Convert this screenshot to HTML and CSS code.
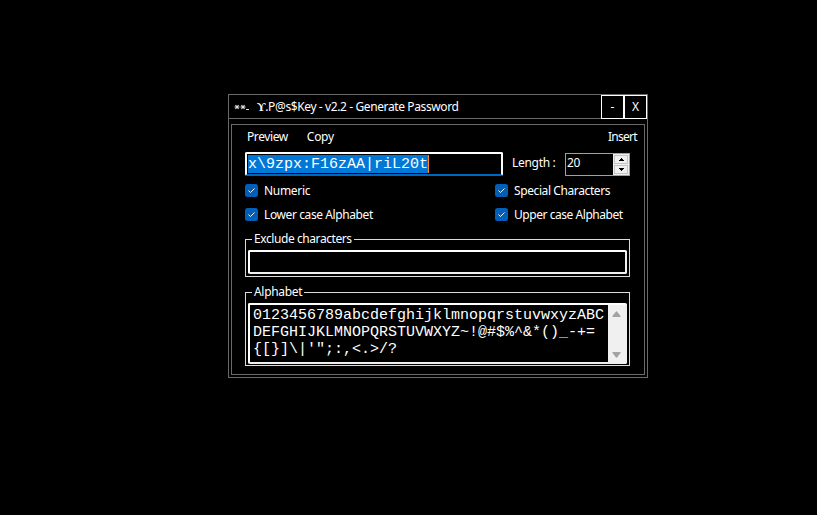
FILE: index.html
```html
<!DOCTYPE html>
<html lang="en">
<head>
<meta charset="utf-8">
<title>Generate Password</title>
<link rel="stylesheet" href="styles.css">
</head>
<body>
<main class="window">
  <header class="titlebar">
    <svg class="app-icon" width="16" height="8" viewBox="0 0 16 8"><path d="M1.500 2l3 4M4.500 2l-3 4M.5 4h5M7.500 2l3 4M10.500 2l-3 4M6.500 4h5M12 6.500h3" stroke="#ddd" stroke-width="1.200" fill="none"/></svg>
    <h1 class="title"><b class="logo">ϒ</b>.P@s$Key - v2.2 - Generate Password</h1>
    <button class="win-btn">-</button>
    <button class="win-btn close">X</button>
  </header>
  <section class="panel">
    <nav class="menu"><span class="m-preview">Preview</span><span class="m-copy">Copy</span><span class="m-insert">Insert</span></nav>
    <div class="row">
      <div class="password"><span class="selection">x\9zpx:F16zAA|riL20t</span></div>
      <span class="length">Length :</span>
      <div class="spinner"><span class="value">20</span>
        <div class="arrows">
          <i class="step"><svg width="5" height="3" viewBox="0 0 5 3"><path d="M2 0h1v1h1v1h1v1H0V2h1V1h1z"/></svg></i>
          <i class="step"><svg width="5" height="3" viewBox="0 0 5 3"><path d="M0 0h5v1H4v1H3v1H2V2H1V1H0z"/></svg></i>
        </div>
      </div>
    </div>
    <div class="checks">
      <label class="check"><svg class="box" width="13" height="13" viewBox="0 0 13 13"><rect width="13" height="13" rx="2.500"/><path d="M3.500 6.500l2 2 4-4"/></svg><span class="c-num">Numeric</span></label>
      <label class="check"><svg class="box" width="13" height="13" viewBox="0 0 13 13"><rect width="13" height="13" rx="2.500"/><path d="M3.500 6.500l2 2 4-4"/></svg><span class="c-long">Special Characters</span></label>
      <label class="check"><svg class="box" width="13" height="13" viewBox="0 0 13 13"><rect width="13" height="13" rx="2.500"/><path d="M3.500 6.500l2 2 4-4"/></svg><span class="c-long">Lower case Alphabet</span></label>
      <label class="check"><svg class="box" width="13" height="13" viewBox="0 0 13 13"><rect width="13" height="13" rx="2.500"/><path d="M3.500 6.500l2 2 4-4"/></svg><span class="c-upper">Upper case Alphabet</span></label>
    </div>
    <div class="group exclude">
      <span class="legend l-excl">Exclude characters</span>
      <div class="field"></div>
    </div>
    <div class="group alphabet">
      <span class="legend">Alphabet</span>
      <div class="field area">
        <div class="chars">0123456789abcdefghijklmnopqrstuvwxyzABC<br>DEFGHIJKLMNOPQRSTUVWXYZ~!@#$%^&amp;*()_-+=<br>{[}]\|'";:,&lt;.&gt;/?</div>
        <div class="scrollbar">
          <svg width="9" height="6" viewBox="0 0 9 6"><path d="M1 6Q0 6 .5 5L4 .5Q4.500 0 5 .5L8.500 5Q9 6 8 6z"/></svg>
          <svg width="9" height="6" viewBox="0 0 9 6"><path d="M1 0Q0 0 .5 1L4 5.500Q4.500 6 5 5.500L8.500 1Q9 0 8 0z"/></svg>
        </div>
      </div>
    </div>
  </section>
</main>
</body>
</html>
```
FILE: styles.css
```css
* { box-sizing: border-box; }
body { margin: 0; padding: 94px 0 0 228px; height: 515px; background: #000; color: #fff; font: 12px/16px "Noto Sans", sans-serif; letter-spacing: -0.3px; overflow: hidden; }
svg { display: block; flex: none; }
span, h1 { white-space: nowrap; }
.window { width: 420px; height: 284px; border: 1px solid #696969; }
.titlebar { display: flex; align-items: center; height: 24px; border-bottom: 1px solid #696969; }
.app-icon { margin-left: 5px; }
.title { flex: 1; margin: 0 0 0 7px; font-size: 12px; font-weight: 400; letter-spacing: -0.39px; }
.logo { font-family: "Liberation Serif", serif; font-size: 12px; }
.win-btn { width: 23px; height: 24px; margin: 0; padding: 0; border: 1px solid #fff; background: #000; color: #fff; font: 12px/16px "Noto Sans", sans-serif; }
.close { width: 24px; margin-left: -1px; border-left-width: 2px; }
.panel { width: 414px; height: 251px; margin: 5px 0 0 2px; padding: 4px 14px 0 13px; border: 1px solid #696969; }
.menu { display: flex; height: 16px; padding-left: 2px; }
.m-preview { letter-spacing: -0.4px; }
.m-copy { margin-left: 19px; }
.m-insert { margin-left: auto; margin-right: -7px; letter-spacing: -0.7px; }
.row { display: flex; height: 24px; margin-top: 7px; }
.password { flex: none; width: 258px; height: 24px; padding: 1px 1px 0; border: 2px solid #fff; border-bottom-color: #0067c0; border-radius: 2px; font: 15px/19px "Liberation Mono", monospace; letter-spacing: 0; }
.selection { display: block; width: 181px; height: 18px; border-right: 1px solid #ff8728; background: #0078d7; }
.length { flex: none; margin: 3px 0 0 9px; width: 53px; }
.spinner { flex: none; display: flex; width: 65px; height: 23px; margin-top: 1px; border: 1px solid #a0a0a0; }
.value { flex: 1; padding: 1px; }
.arrows { width: 16px; background: #f0f0f0; padding: 1px; }
.step { display: flex; align-items: center; justify-content: center; height: 9px; border: 1px solid #c4c4c4; }
.step + .step { margin-top: 1px; }
.checks { display: grid; grid-template-columns: 250px 135px; grid-template-rows: 24px 24px; margin-top: 3px; }
.check { display: flex; align-items: flex-start; gap: 6px; padding-top: 4px; }
.c-long { letter-spacing: -0.4px; }
.c-upper { letter-spacing: -0.45px; }
.box { margin-top: 1px; }
.box rect { fill: #005fb8; }
.box path { fill: none; stroke: #fff; stroke-width: 1; }
.group { width: 385px; border: 1px solid #dcdcdc; padding: 10px 2px 0; position: relative; }
.exclude { height: 38px; margin-top: 12px; }
.alphabet { height: 74px; margin-top: 15px; }
.legend { position: absolute; left: 6px; top: -9px; padding: 0 2px; background: #000; }
.l-excl { letter-spacing: -0.42px; }
.field { width: 379px; height: 24px; border: 2px solid #fff; border-right-color: #f0f0f0; border-bottom-color: #f0f0f0; border-radius: 2px; }
.area { display: flex; height: 61px; }
.chars { flex: 1; padding: 2px 0 0 3px; font: 15px/17px "Liberation Mono", monospace; letter-spacing: 0; white-space: nowrap; }
.scrollbar { display: flex; flex-direction: column; justify-content: space-between; align-items: center; width: 17px; padding: 6px 0 4px; background: #f0f0f0; }
.scrollbar path { fill: #a3a3a3; }
```
